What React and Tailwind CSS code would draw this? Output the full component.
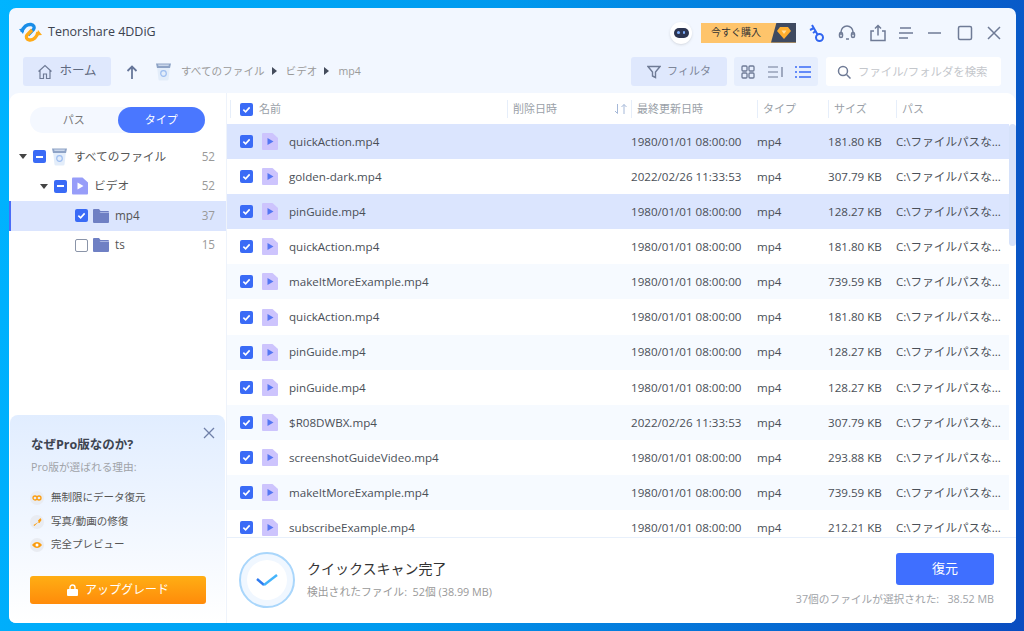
import React from "react";

const FONT = { fontFamily: '"Open Sans","Noto Sans CJK JP",sans-serif' };

const files = [
  ["quickAction.mp4", "1980/01/01 08:00:00", "181.80 KB", "sel"],
  ["golden-dark.mp4", "2022/02/26 11:33:53", "307.79 KB", "white"],
  ["pinGuide.mp4", "1980/01/01 08:00:00", "128.27 KB", "sel"],
  ["quickAction.mp4", "1980/01/01 08:00:00", "181.80 KB", "white"],
  ["makeItMoreExample.mp4", "1980/01/01 08:00:00", "739.59 KB", "alt"],
  ["quickAction.mp4", "1980/01/01 08:00:00", "181.80 KB", "white"],
  ["pinGuide.mp4", "1980/01/01 08:00:00", "128.27 KB", "alt"],
  ["pinGuide.mp4", "1980/01/01 08:00:00", "128.27 KB", "white"],
  ["$R08DWBX.mp4", "2022/02/26 11:33:53", "307.79 KB", "alt"],
  ["screenshotGuideVideo.mp4", "1980/01/01 08:00:00", "293.88 KB", "white"],
  ["makeItMoreExample.mp4", "1980/01/01 08:00:00", "739.59 KB", "alt"],
  ["subscribeExample.mp4", "1980/01/01 08:00:00", "212.21 KB", "white"],
];

const rowBg = { sel: "bg-[#dbe5fe]", white: "bg-white", alt: "bg-[#f6faff]" };

function Check({ state = "on" }) {
  if (state === "off")
    return <span className="block w-[13px] h-[13px] rounded-[2px] border border-[#8a94a8] bg-white shrink-0" />;
  return (
    <span className="flex items-center justify-center w-[13px] h-[13px] rounded-[2px] bg-[#3a6bf6] shrink-0">
      {state === "on" ? (
        <svg width="9" height="9" viewBox="0 0 10 10" fill="none">
          <path d="M1.5 5.2 4 7.5 8.5 2.6" stroke="#fff" strokeWidth="1.8" />
        </svg>
      ) : (
        <span className="block w-[7px] h-[2px] bg-white" />
      )}
    </span>
  );
}

function VideoIcon({ big }) {
  const cls = big ? "w-[16px] h-[18px]" : "w-[16px] h-[17px]";
  return (
    <svg className={cls + " shrink-0"} viewBox="0 0 16 17">
      <path d="M1 0h9.5L16 5v11a1 1 0 0 1-1 1H1a1 1 0 0 1-1-1V1a1 1 0 0 1 1-1z" fill={big ? "#979df9" : "#cdc4fd"} />
      <path d="M5.5 5v7l6-3.5z" fill={big ? "#fff" : "#5577f3"} />
    </svg>
  );
}

function FolderIcon() {
  return (
    <svg className="w-[16px] h-[14px] shrink-0" viewBox="0 0 16 14">
      <path d="M1 0h5l1.5 2H15a1 1 0 0 1 1 1v10a1 1 0 0 1-1 1H1a1 1 0 0 1-1-1V1a1 1 0 0 1 1-1z" fill="#6f80c4" />
      <path d="M6.5 3H16v1H7.5z" fill="#a9b5e2" />
    </svg>
  );
}

function TrashIcon() {
  return (
    <svg className="w-[17px] h-[19px] shrink-0" viewBox="0 0 17 19">
      <path d="M2 4h13l-1.4 13a1.6 1.6 0 0 1-1.6 1.5H5A1.6 1.6 0 0 1 3.400 17z" fill="#e3edfa" />
      <path d="M1 1.500h15L15 6H2z" fill="#8ea3c6" />
      <path d="M3 2.500h11l-.5 1.500H3.500z" fill="#c9d6ea" />
      <circle cx="8.500" cy="11.500" r="2.800" fill="none" stroke="#9dbdf0" strokeWidth="1.200" />
    </svg>
  );
}

function Caret() {
  return <span className="block w-0 h-0 border-x-[4px] border-x-transparent border-t-[5px] border-t-[#444] shrink-0" />;
}

function Tri() {
  return <span className="block w-0 h-0 border-y-[4px] border-y-transparent border-l-[5px] border-l-[#444c5c] ml-[7px] mr-[9px]" />;
}

function Logo() {
  return (
    <svg className="w-[23px] h-[21px] shrink-0" viewBox="0 0 23 21" fill="none">
      <path d="M3 10C4 5 8 2 12 2.500c3 .4 4 3 2.500 5L9 13" stroke="#1a8ee8" strokeWidth="3.400" />
      <path d="M0 7l5.500-.5L4 12z" fill="#1a8ee8" />
      <path d="M19 10c-1 5-4.500 8.500-8.500 8-3-.4-4-3-2.500-5l5-5" stroke="#ffab19" strokeWidth="3.400" />
      <path d="M23 13l-5.500.5L19 8z" fill="#ffab19" />
    </svg>
  );
}

function Side({ children, className = "" }) {
  return (
    <svg className={"w-[20px] h-[20px] shrink-0 " + className} viewBox="0 0 20 20" fill="none" stroke="#6f7b96" strokeWidth="1.500">
      {children}
    </svg>
  );
}

function FeatureIcon({ children }) {
  return (
    <span className="flex items-center justify-center w-[14px] h-[14px] rounded-full bg-[#e9ecf2] shrink-0">
      <svg width="10" height="10" viewBox="0 0 10 10">{children}</svg>
    </span>
  );
}

function Feature({ icon, label }) {
  return (
    <div className="flex items-center h-[14px] gap-[7px] text-[10.500px] text-[#555]">
      {icon}
      <span>{label}</span>
    </div>
  );
}

function TreeRow({ pad, caret, check, icon, label, count, active }) {
  return (
    <div className={"flex items-center h-[29.500px] pr-[11px] text-[11.700px] text-[#555] " + (active ? "bg-[#dbe5fe] border-l-2 border-[#4a6cf7]" : "")} style={{ paddingLeft: active ? pad - 2 : pad }}>
      <span className="w-[14px] shrink-0 flex">{caret && <Caret />}</span>
      <Check state={check} />
      <span className="w-[5px] shrink-0" />
      {icon}
      <span className="ml-[6px] flex-1">{label}</span>
      <span className="text-[#999]">{count}</span>
    </div>
  );
}

function HeadCell({ children, extra }) {
  return (
    <div className="flex items-center h-[18px] border-l border-[#e6eefa] pl-[5px] text-[11px] text-[#9a9fa8]">
      <span className="flex-1">{children}</span>
      {extra}
    </div>
  );
}

export default function App() {
  return (
    <div
      className="w-[1024px] h-[631px] overflow-hidden pl-[9px] pr-[8px] pt-[8px] pb-[8px] bg-[linear-gradient(100deg,#00b4ff_0%,#0099ee_45%,#0a4cc0_100%)]"
      style={FONT}
    >
      <div className="w-full h-full flex flex-col rounded-[7px] overflow-hidden bg-[#f2f7ff]">
        {/* title bar */}
        <div className="h-[49px] shrink-0 flex items-center pl-[10px] pr-[12px]">
          <Logo />
          <span className="ml-[6px] text-[12.500px] text-[#3c4350]">Tenorshare 4DDiG</span>
          <div className="flex-1" />
          <span className="flex items-center justify-center w-[22px] h-[22px] rounded-full bg-white shadow-sm">
            <span className="flex items-center justify-center gap-[3px] w-[15px] h-[10px] rounded-full bg-[#2d3550]">
              <span className="w-[2.500px] h-[3px] rounded-full bg-[#7fb0ff]" />
              <span className="w-[2.500px] h-[3px] rounded-full bg-[#7fb0ff]" />
            </span>
          </span>
          <div className="ml-[9px] w-[95px] h-[20px] flex items-stretch bg-[#fec46b] overflow-hidden">
            <span className="w-[70px] flex items-center justify-center text-[10px] text-[#333]">今すぐ購入</span>
            <span className="flex-1 flex items-center justify-center bg-[#3f4a60] [clip-path:polygon(22%_0,100%_0,100%_100%,0_100%)]">
              <svg width="14" height="12" viewBox="0 0 14 12">
                <path d="M3 0h8l3 4-7 8-7-8z" fill="#ffae2e" />
                <path d="M4.500 3.500h5L7 7z" fill="#ffe0a0" />
              </svg>
            </span>
          </div>
          <svg className="ml-[13px] w-[16px] h-[20px] shrink-0" viewBox="0 0 16 20" fill="none" stroke="#3266f0" strokeWidth="2">
            <circle cx="10.500" cy="14.500" r="3.500" />
            <path d="M8.500 11.500 3 2M4 5.500 1 7M6 8.500 4 10" />
          </svg>
          <Side className="ml-[12px]">
            <path d="M4 12V9a6 6 0 0 1 12 0v3" />
            <rect x="2.500" y="9.500" width="3" height="5" rx="1.500" />
            <rect x="14.500" y="9.500" width="3" height="5" rx="1.500" />
            <path d="M9 16h3" />
          </Side>
          <Side className="ml-[11px]">
            <path d="M6 8H3v9.500h14V8h-3M10 12.500V2.500M7 5.500l3-3 3 3" />
          </Side>
          <Side className="ml-[8px]">
            <path d="M4 5h11M3 10h14M3 15h9" />
          </Side>
          <Side className="ml-[9px]">
            <path d="M3 10h13" />
          </Side>
          <Side className="ml-[10px]">
            <rect x="3.500" y="3.500" width="13" height="13" rx="1.500" />
          </Side>
          <Side className="ml-[9px]">
            <path d="M4 4l12 12M16 4 4 16" />
          </Side>
        </div>

        {/* toolbar */}
        <div className="h-[29px] shrink-0 flex items-center pl-[14px] pr-[15px] mb-[7px]">
          <div className="w-[88px] h-full flex items-center justify-center gap-[6px] rounded-[3px] bg-[#dfe8fd] text-[12.500px] text-[#5f6a80]">
            <svg className="w-[16px] h-[16px]" viewBox="0 0 16 16" fill="none" stroke="#6f7b96" strokeWidth="1.200">
              <path d="M1.500 7.500 8 1.500l6.500 6M3 6.500V14.500h3.500V10h3v4.500H13V6.500" />
            </svg>
            ホーム
          </div>
          <svg className="ml-[15px] w-[12px] h-[14px]" viewBox="0 0 12 14" fill="none" stroke="#66769a" strokeWidth="1.800">
            <path d="M6 14V1.500M1.500 6 6 1.500 10.500 6" />
          </svg>
          <span className="ml-[17px]"><TrashIcon /></span>
          <div className="ml-[9px] flex items-center text-[10.600px] text-[#9a9a9a]">
            <span>すべてのファイル</span>
            <Tri />
            <span>ビデオ</span>
            <Tri />
            <span>mp4</span>
          </div>
          <div className="flex-1" />
          <div className="w-[96px] h-full flex items-center justify-center gap-[6px] rounded-[3px] bg-[#dfe8fd] text-[11px] text-[#7d8699]">
            <svg className="w-[14px] h-[14px]" viewBox="0 0 14 14" fill="none" stroke="#6f7b96" strokeWidth="1.400">
              <path d="M1 1.500h12L8.500 7v5.500l-3-1.500V7z" />
            </svg>
            フィルタ
          </div>
          <div className="ml-[7px] w-[84px] h-full flex items-center justify-between px-[7px] rounded-[3px] bg-[#e6eefd]">
            <svg className="w-[14px] h-[14px]" viewBox="0 0 14 14" fill="none" stroke="#6f7b96" strokeWidth="1.300">
              <rect x="1" y="1" width="5" height="5" rx="1" />
              <rect x="8" y="1" width="5" height="5" rx="1" />
              <rect x="1" y="8" width="5" height="5" rx="1" />
              <rect x="8" y="8" width="5" height="5" rx="1" />
            </svg>
            <svg className="w-[16px] h-[14px]" viewBox="0 0 16 14" fill="none" stroke="#6f7b96" strokeWidth="1.200">
              <path d="M1 2h10M1 7h10M1 12h10M15 2v10" />
            </svg>
            <svg className="w-[16px] h-[14px]" viewBox="0 0 16 14" fill="none" stroke="#3a6bf6" strokeWidth="1.300">
              <path d="M0 2h2M4 2h12M0 7h2M4 7h12M0 12h2M4 12h12" />
            </svg>
          </div>
          <div className="ml-[8px] w-[175px] h-full flex items-center pl-[11px] gap-[7px] rounded-[3px] bg-white text-[11.400px] text-[#c4c7cc]">
            <svg className="w-[14px] h-[14px]" viewBox="0 0 14 14" fill="none" stroke="#6f7b96" strokeWidth="1.500">
              <circle cx="6" cy="6" r="4.500" />
              <path d="m9.500 9.500 4 4" />
            </svg>
            ファイル/フォルダを検索
          </div>
        </div>

        {/* main */}
        <div className="flex-1 min-h-0 flex rounded-t-[10px] overflow-hidden bg-white">
          {/* sidebar */}
          <div className="w-[218px] shrink-0 flex flex-col border-r border-[#eef3fb]">
            <div className="mt-[14px] mx-[21px] h-[26px] flex rounded-full bg-[#f4f8ff] text-[11px]">
              <span className="w-[88px] pt-px flex items-center justify-center text-[#777]">パス</span>
              <span className="w-[88px] pt-px flex items-center justify-center rounded-full bg-[#4a77ff] text-white">タイプ</span>
            </div>
            <div className="mt-[9px]">
              <TreeRow pad={10} caret check="mixed" icon={<TrashIcon />} label="すべてのファイル" count="52" />
              <TreeRow pad={31} caret check="mixed" icon={<VideoIcon big />} label="ビデオ" count="52" />
              <TreeRow pad={52} check="on" icon={<FolderIcon />} label="mp4" count="37" active />
              <TreeRow pad={52} check="off" icon={<FolderIcon />} label="ts" count="15" />
            </div>
            <div className="flex-1" />
            <div className="mx-px mb-[1px] h-[207px] rounded-t-[8px] bg-[linear-gradient(180deg,#e1edff_0%,#ffffff_100%)] pl-[21px] pr-[19px] pt-[21px] flex flex-col">
              <div className="flex items-start justify-between">
                <span className="text-[12.500px] leading-[18px] font-bold text-[#3d4450]">なぜPro版なのか?</span>
                <svg className="w-[12px] h-[12px] mr-[-9px] mt-[-9px]" viewBox="0 0 12 12" fill="none" stroke="#6f7fa8" strokeWidth="1.300">
                  <path d="m1 1 10 10M11 1 1 11" />
                </svg>
              </div>
              <div className="mt-[5px] text-[10.700px] leading-[16px] text-[#a0a3a8]">Pro版が選ばれる理由:</div>
              <div className="mt-[16px] -ml-px flex flex-col gap-[9.500px]">
                <Feature label="無制限にデータ復元" icon={<FeatureIcon><path d="M1 5a2 2 0 0 1 4 0 2 2 0 0 0 4 0 2 2 0 0 0-4 0 2 2 0 0 1-4 0z" fill="none" stroke="#fb9d10" strokeWidth="1.300" /></FeatureIcon>} />
                <Feature label="写真/動画の修復" icon={<FeatureIcon><path d="M8.500 1 6 3.500l.5 1.500L1.500 8l.8 1L6 5.500 7.500 6 9.500 3z" fill="#fb9d10" /></FeatureIcon>} />
                <Feature label="完全プレビュー" icon={<FeatureIcon><path d="M0 5c3-4 7-4 10 0-3 4-7 4-10 0z" fill="#fb9d10" /><circle cx="5" cy="5" r="1.500" fill="#fff" /></FeatureIcon>} />
              </div>
              <div className="mt-[24px] -ml-px h-[28px] w-[176px] flex items-center justify-center gap-[7px] rounded-[3px] bg-[linear-gradient(180deg,#ffae14_0%,#ff8b0a_100%)] text-[12px] text-white">
                <svg className="w-[11px] h-[12px]" viewBox="0 0 11 12">
                  <path d="M3 5V3.500a2.500 2.500 0 0 1 5 0V5" fill="none" stroke="#fff" strokeWidth="1.400" />
                  <rect y="5" width="11" height="7" rx="1" fill="#fff" />
                </svg>
                アップグレード
              </div>
            </div>
          </div>

          {/* table */}
          <div className="flex-1 min-w-0 flex flex-col">
            <div className="h-[31px] pt-[1px] shrink-0 grid grid-cols-[277px_124px_126px_71px_68px_1fr] items-center pl-[3px] pr-[8px] bg-white">
              <HeadCell>
                <span className="flex items-center gap-[6px] pl-[4px]">
                  <Check />
                  名前
                </span>
              </HeadCell>
              <HeadCell extra={
                <svg className="w-[14px] h-[10px] mr-[3px]" viewBox="0 0 14 10" fill="none" stroke="#a5b8d8" strokeWidth="1">
                  <path d="M3.500 0v9.500M1 7l2.500 2.500M10 10V.5M7.500 3 10 .5 12.500 3" />
                </svg>
              }>削除日時</HeadCell>
              <HeadCell>最終更新日時</HeadCell>
              <HeadCell>タイプ</HeadCell>
              <HeadCell>サイズ</HeadCell>
              <HeadCell>パス</HeadCell>
            </div>
            <div className="flex-1 min-h-0 flex">
              <div className="flex-1 min-w-0 overflow-hidden">
                {files.map(([name, date, size, bg], i) => (
                  <div key={i} className={"h-[35.100px] grid grid-cols-[404px_126px_71px_68px_1fr] items-center text-[11.600px] text-[#4a4f57] " + rowBg[bg]}>
                    <div className="flex items-center pl-[13px]">
                      <Check />
                      <span className="w-[9px]" />
                      <VideoIcon />
                      <span className="ml-[11px]">{name}</span>
                    </div>
                    <span>{date}</span>
                    <span>mp4</span>
                    <span>{size}</span>
                    <span className="whitespace-nowrap overflow-hidden">C:\ファイルパスな...</span>
                  </div>
                ))}
              </div>
              <div className="w-[7px] shrink-0 bg-white">
                <div className="h-[122px] bg-[#d6e2fa] rounded-full" />
              </div>
            </div>
            {/* bottom */}
            <div className="h-[86px] shrink-0 flex items-center pl-[12px] pr-[22px] border-t border-[#e8f0fb] bg-white">
              <div className="relative w-[56px] h-[56px] mb-[2px] rounded-full border-2 border-[#a9d6fb] bg-[#f0f7ff] flex items-center justify-center shrink-0">
                <span className="w-[40px] h-[40px] rounded-full bg-white flex items-center justify-center">
                  <svg width="22" height="14" viewBox="0 0 22 14" fill="none">
                    <path d="M1 6l7 6" stroke="#2f7bf0" strokeWidth="2.400" />
                    <path d="M8 12 21 2" stroke="#45b4fb" strokeWidth="2.400" />
                  </svg>
                </span>
              </div>
              <div className="ml-[12px] flex-1 pb-[3px]">
                <div className="text-[14px] leading-[20px] text-[#333]">クイックスキャン完了</div>
                <div className="mt-[6px] text-[10.800px] leading-[14px] text-[#999]">検出されたファイル:&nbsp; 52個 (38.99 MB)</div>
              </div>
              <div className="flex flex-col items-end pb-[3px]">
                <div className="w-[98px] h-[32px] flex items-center justify-center rounded-[3px] bg-[#3f6fff] text-[13px] text-white">復元</div>
                <div className="mt-[7px] text-[10.700px] leading-[14px] text-[#a0a3a8] whitespace-nowrap">37個のファイルが選択された:&nbsp;&nbsp; 38.52 MB</div>
              </div>
            </div>
          </div>
        </div>
      </div>
    </div>
  );
}
